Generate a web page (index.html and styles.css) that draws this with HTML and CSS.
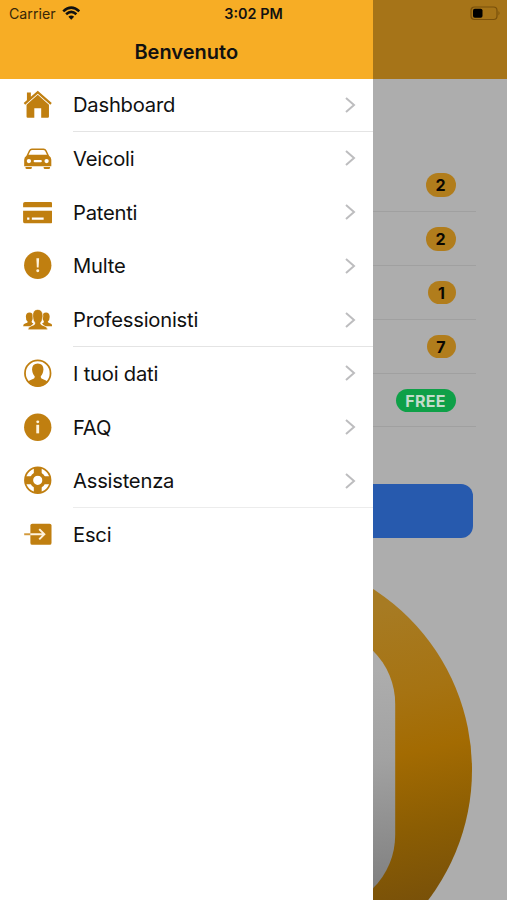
FILE: index.html
```html
<!DOCTYPE html>
<html lang="it">
<head>
<meta charset="utf-8">
<title>Benvenuto</title>
<link rel="stylesheet" href="styles.css">
</head>
<body>
<div class="app">
  <aside class="drawer">
    <header class="bar"><h1>Benvenuto</h1></header>
    <nav class="menu">
      <a class="item"><svg class="icon" viewBox="0 0 30 30"><path d="M4 2.500h4v4.300L4 10.300zM15 .8l14.300 12.500-1.500 1.800L15 3.800 2.200 15.100.7 13.300z"/><path d="M15 4.900l11.400 10.100V27q0 1.200-1.200 1.200h-6.700v-9.700h-7v9.700H4.800q-1.200 0-1.200-1.200V15z"/></svg><span class="label line">Dashboard</span><svg class="chevron" viewBox="0 0 12 18"><path d="M2 2l8 7-8 7"/></svg></a>
      <a class="item"><svg class="icon" viewBox="0 0 30 30"><path fill-rule="evenodd" d="M9 4.500h12q2 0 3 2l2.500 5.500q2.300 1.500 2.300 4v6.500H1.200V16q0-2.500 2.300-4L6 6.500q1-2 3-2zM9.500 6q-1.500 0-2 1L5.600 11h18.800l-1.900-4q-.5-1-2-1zM6 15.200a2.200 2.200 0 100 4.400 2.200 2.200 0 000-4.400zm18 0a2.200 2.200 0 100 4.400 2.200 2.200 0 000-4.400zM12 16.200q-1.200 0-1.200 1.200t1.200 1.200h6q1.200 0 1.200-1.200T18 16.200z"/><path d="M2.500 23.300H9v.9q0 1.300-1.300 1.300H3.800q-1.300 0-1.300-1.300zm18.500 0h6.500v.9q0 1.300-1.300 1.300h-3.900q-1.300 0-1.300-1.300z"/></svg><span class="label">Veicoli</span><svg class="chevron" viewBox="0 0 12 18"><path d="M2 2l8 7-8 7"/></svg></a>
      <a class="item"><svg class="icon" viewBox="0 0 30 30"><path d="M2 4h26q1.900 0 1.900 1.900v3.600H.1V5.900Q.1 4 2 4z"/><path fill-rule="evenodd" d="M.1 13h29.800v10.900q0 1.900-1.900 1.900H2q-1.900 0-1.900-1.900zM4.200 19.800v2.200h2.300v-2.200zm4.800 0v2.200h12v-2.200z"/></svg><span class="label">Patenti</span><svg class="chevron" viewBox="0 0 12 18"><path d="M2 2l8 7-8 7"/></svg></a>
      <a class="item"><svg class="icon" viewBox="0 0 30 30"><circle cx="15" cy="14.500" r="13.900"/><path class="cut" d="M13.600 7.300h2.800l-.5 9.600h-1.800z"/><circle class="cut" cx="15" cy="20" r="1.500"/></svg><span class="label">Multe</span><svg class="chevron" viewBox="0 0 12 18"><path d="M2 2l8 7-8 7"/></svg></a>
      <a class="item"><svg class="icon" viewBox="0 0 30 30"><path d="M.1 21.500q0-2.200 2.600-2.900 2.200-.5 2.100-1.600-2.100-1.500-1.900-5.500.2-3.900 3.700-3.900t3.700 3.900q0 3.500-1.600 5.500 0 1.200 2 1.700l-3 2.800z"/><path d="M29.900 21.500q0-2.200-2.600-2.900-2.200-.5-2.100-1.600 2.100-1.500 1.900-5.500-.2-3.900-3.700-3.900t-3.700 3.900q0 3.500 1.600 5.500 0 1.200-2 1.700l3 2.800z"/><path class="person" d="M5 25.200q0-3.200 4-4.200 3.500-.8 3.200-2.700-2-1.700-2.400-7Q9.800 4.500 15 4.500t5.200 6.800q-.4 5.300-2.400 7-.3 1.900 3.200 2.700 4 1 4 4.200z"/></svg><span class="label line">Professionisti</span><svg class="chevron" viewBox="0 0 12 18"><path d="M2 2l8 7-8 7"/></svg></a>
      <a class="item"><svg class="icon" viewBox="0 0 30 30"><circle class="ring" cx="15" cy="14.500" r="13"/><path d="M5 23.500q1-2.200 4.500-3 2.700-.6 2.400-3-2.200-1.700-2.700-6.700Q9.200 4.500 15 4.500t5.800 6.300q-.5 5-2.700 6.700-.3 2.400 2.400 3 3.500.8 4.500 3-4.200 4.600-10 4.600T5 23.500z"/></svg><span class="label">I tuoi dati</span><svg class="chevron" viewBox="0 0 12 18"><path d="M2 2l8 7-8 7"/></svg></a>
      <a class="item"><svg class="icon" viewBox="0 0 30 30"><circle cx="15" cy="14.500" r="13.900"/><circle class="cut" cx="15" cy="9" r="1.500"/><path class="cut" d="M13.500 12h2.900v8.700h-2.900z"/></svg><span class="label">FAQ</span><svg class="chevron" viewBox="0 0 12 18"><path d="M2 2l8 7-8 7"/></svg></a>
      <a class="item"><svg class="icon" viewBox="0 0 30 30"><circle class="ring" cx="15" cy="14.500" r="13"/><circle class="buoy" cx="15" cy="14.500" r="6.500"/><path d="M11 1.500h8v8h-8zm0 18h8v8h-8zM2 10.500h8v8H2zm18 0h8v8h-8z"/></svg><span class="label line thick">Assistenza</span><svg class="chevron" viewBox="0 0 12 18"><path d="M2 2l8 7-8 7"/></svg></a>
      <a class="item"><svg class="icon" viewBox="0 0 30 30"><rect x="7.500" y="3.700" width="21.500" height="21.500" rx="1.900"/><path class="shaft" d="M1.200 14.500h6.300"/><path class="arrow" d="M7.500 14.500h14M16.500 9.300l5.200 5.200-5.200 5.200"/></svg><span class="label">Esci</span></a>
    </nav>
  </aside>
  <main class="page">
    <div class="bar"></div>
    <div class="stats">
      <div class="stat"><b class="badge">2</b></div>
      <div class="stat"><b class="badge">2</b></div>
      <div class="stat"><b class="badge one">1</b></div>
      <div class="stat"><b class="badge seven">7</b></div>
      <div class="stat"><b class="badge free">FREE</b></div>
    </div>
    <div class="button"></div>
    <svg class="logo" viewBox="372.500 555 134.500 345">
      <defs>
        <linearGradient id="gold" gradientUnits="userSpaceOnUse" x1="365" y1="610" x2="429" y2="900"><stop offset="0" stop-color="#a77b23"/><stop offset=".3" stop-color="#a67312"/><stop offset=".5" stop-color="#a36b02"/><stop offset=".76" stop-color="#8b5d03"/><stop offset="1" stop-color="#795109"/></linearGradient>
        <linearGradient id="silver" gradientUnits="userSpaceOnUse" x1="373" y1="670" x2="395" y2="890"><stop offset="0" stop-color="#adadad"/><stop offset=".4" stop-color="#a2a2a2"/><stop offset="1" stop-color="#7f7f7f"/></linearGradient>
      </defs>
      <circle cx="256.500" cy="770" r="215" fill="url(#gold)"/>
      <rect x="119" y="629" width="275.700" height="281" rx="75" fill="url(#silver)"/>
    </svg>
  </main>
  <div class="status">
    <span class="carrier">Carrier <svg class="wifi" viewBox="0 0 18 14"><path d="M1.200 5.200Q9-2 16.800 5.200M4 8q5-4.600 10 0"/><path class="dot" d="M6.200 10.400q2.800-2.500 5.600 0L9 13.300z"/></svg></span>
    <span class="time">3:02 PM</span>
    <svg class="battery" viewBox="0 0 31 15"><rect class="shell" x="1" y="1" width="26" height="12.500" rx="3.500"/><rect x="3" y="2.800" width="9.500" height="9" rx="1.800"/><path class="tip" d="M28.500 5q2 2.200 0 4.500z"/></svg>
  </div>
</div>
</body>
</html>
```
FILE: styles.css
```css
* { box-sizing: border-box; }
body { margin: 0; font-family: Inter, "Liberation Sans", sans-serif; color: #111; }
.app { position: relative; display: grid; grid-template-columns: 372.500px 1fr; width: 507px; height: 900px; overflow: hidden; background: #fff; }
.bar { flex: none; height: 79px; padding-top: 40px; background: #f7ad25; text-align: center; }
.bar h1 { margin: 0; font-size: 20px; line-height: 25px; font-weight: 600; letter-spacing: 0; }
.menu { display: flex; flex-direction: column; margin-top: -1px; }
.drawer .bar { position: relative; z-index: 1; }
.item { display: grid; grid-template-columns: 28px 1fr; column-gap: 22.500px; align-items: center; height: 53.750px; padding-left: 22.500px; position: relative; }
.icon { width: 29.500px; height: 29.500px; fill: #c07f10; }
.label { display: flex; align-items: center; height: 100%; padding-top: .6px; font-size: 20.200px; letter-spacing: -.22px; border-bottom: 1px solid transparent; }
.line { border-color: #e4e4e4; }
.thick { border-color: #ececec; }
.chevron { position: absolute; right: 16.800px; top: 17.500px; width: 12px; height: 18px; fill: none; stroke: #bdbdbf; stroke-width: 2; }
.cut { fill: #fff3dc; }
.ring { fill: none; stroke: #c07f10; stroke-width: 1.800; }
.buoy { fill: none; stroke: #c07f10; stroke-width: 3.600; }
.person { stroke: #fff; stroke-width: .6; }
.shaft { stroke: #d39a3c; stroke-width: 2; }
.arrow { fill: none; stroke: #fff3dc; stroke-width: 2; }
.page { display: flex; flex-direction: column; background: #adadad; }
.page .bar { background: #a67418; }
.stats { margin-top: 79px; width: 103px; }
.stat { display: flex; align-items: center; justify-content: flex-end; height: 53.900px; padding: 1px 20px 0 0; border-bottom: 1px solid #a0a0a0; }
.badge { display: grid; place-items: center; width: 30px; height: 23.500px; border-radius: 12px; background: #b17d1c; font-size: 16px; font-weight: 700; color: #0b0802; }
.one { width: 28px; }
.seven { width: 29px; }
.free { width: 60px; background: #0fa048; color: #c3dccb; font-size: 16px; letter-spacing: .3px; }
.button { flex: none; width: 100px; height: 54.500px; margin-top: 56.500px; border-radius: 0 12px 12px 0; background: #275aae; }
.logo { flex: none; width: 134.500px; height: 345px; margin-top: 17px; }
.status { position: absolute; z-index: 2; top: 0; left: 0; width: 507px; height: 27px; padding: 0 6px 0 9px; display: grid; grid-template-columns: 1fr auto 1fr; align-items: center; font-size: 14.200px; }
.carrier { display: flex; align-items: center; gap: 6px; color: #382708; }
.wifi { width: 18.500px; height: 14.400px; fill: none; stroke: #111; stroke-width: 2.500; }
.wifi .dot { fill: #111; stroke: none; }
.time { font-weight: 600; font-size: 14.400px; margin-left: -3px; }
.battery { justify-self: end; width: 31px; height: 15px; }
.shell { fill: none; stroke: #79500b; stroke-width: 1.200; }
.tip { fill: #79500b; }
```
